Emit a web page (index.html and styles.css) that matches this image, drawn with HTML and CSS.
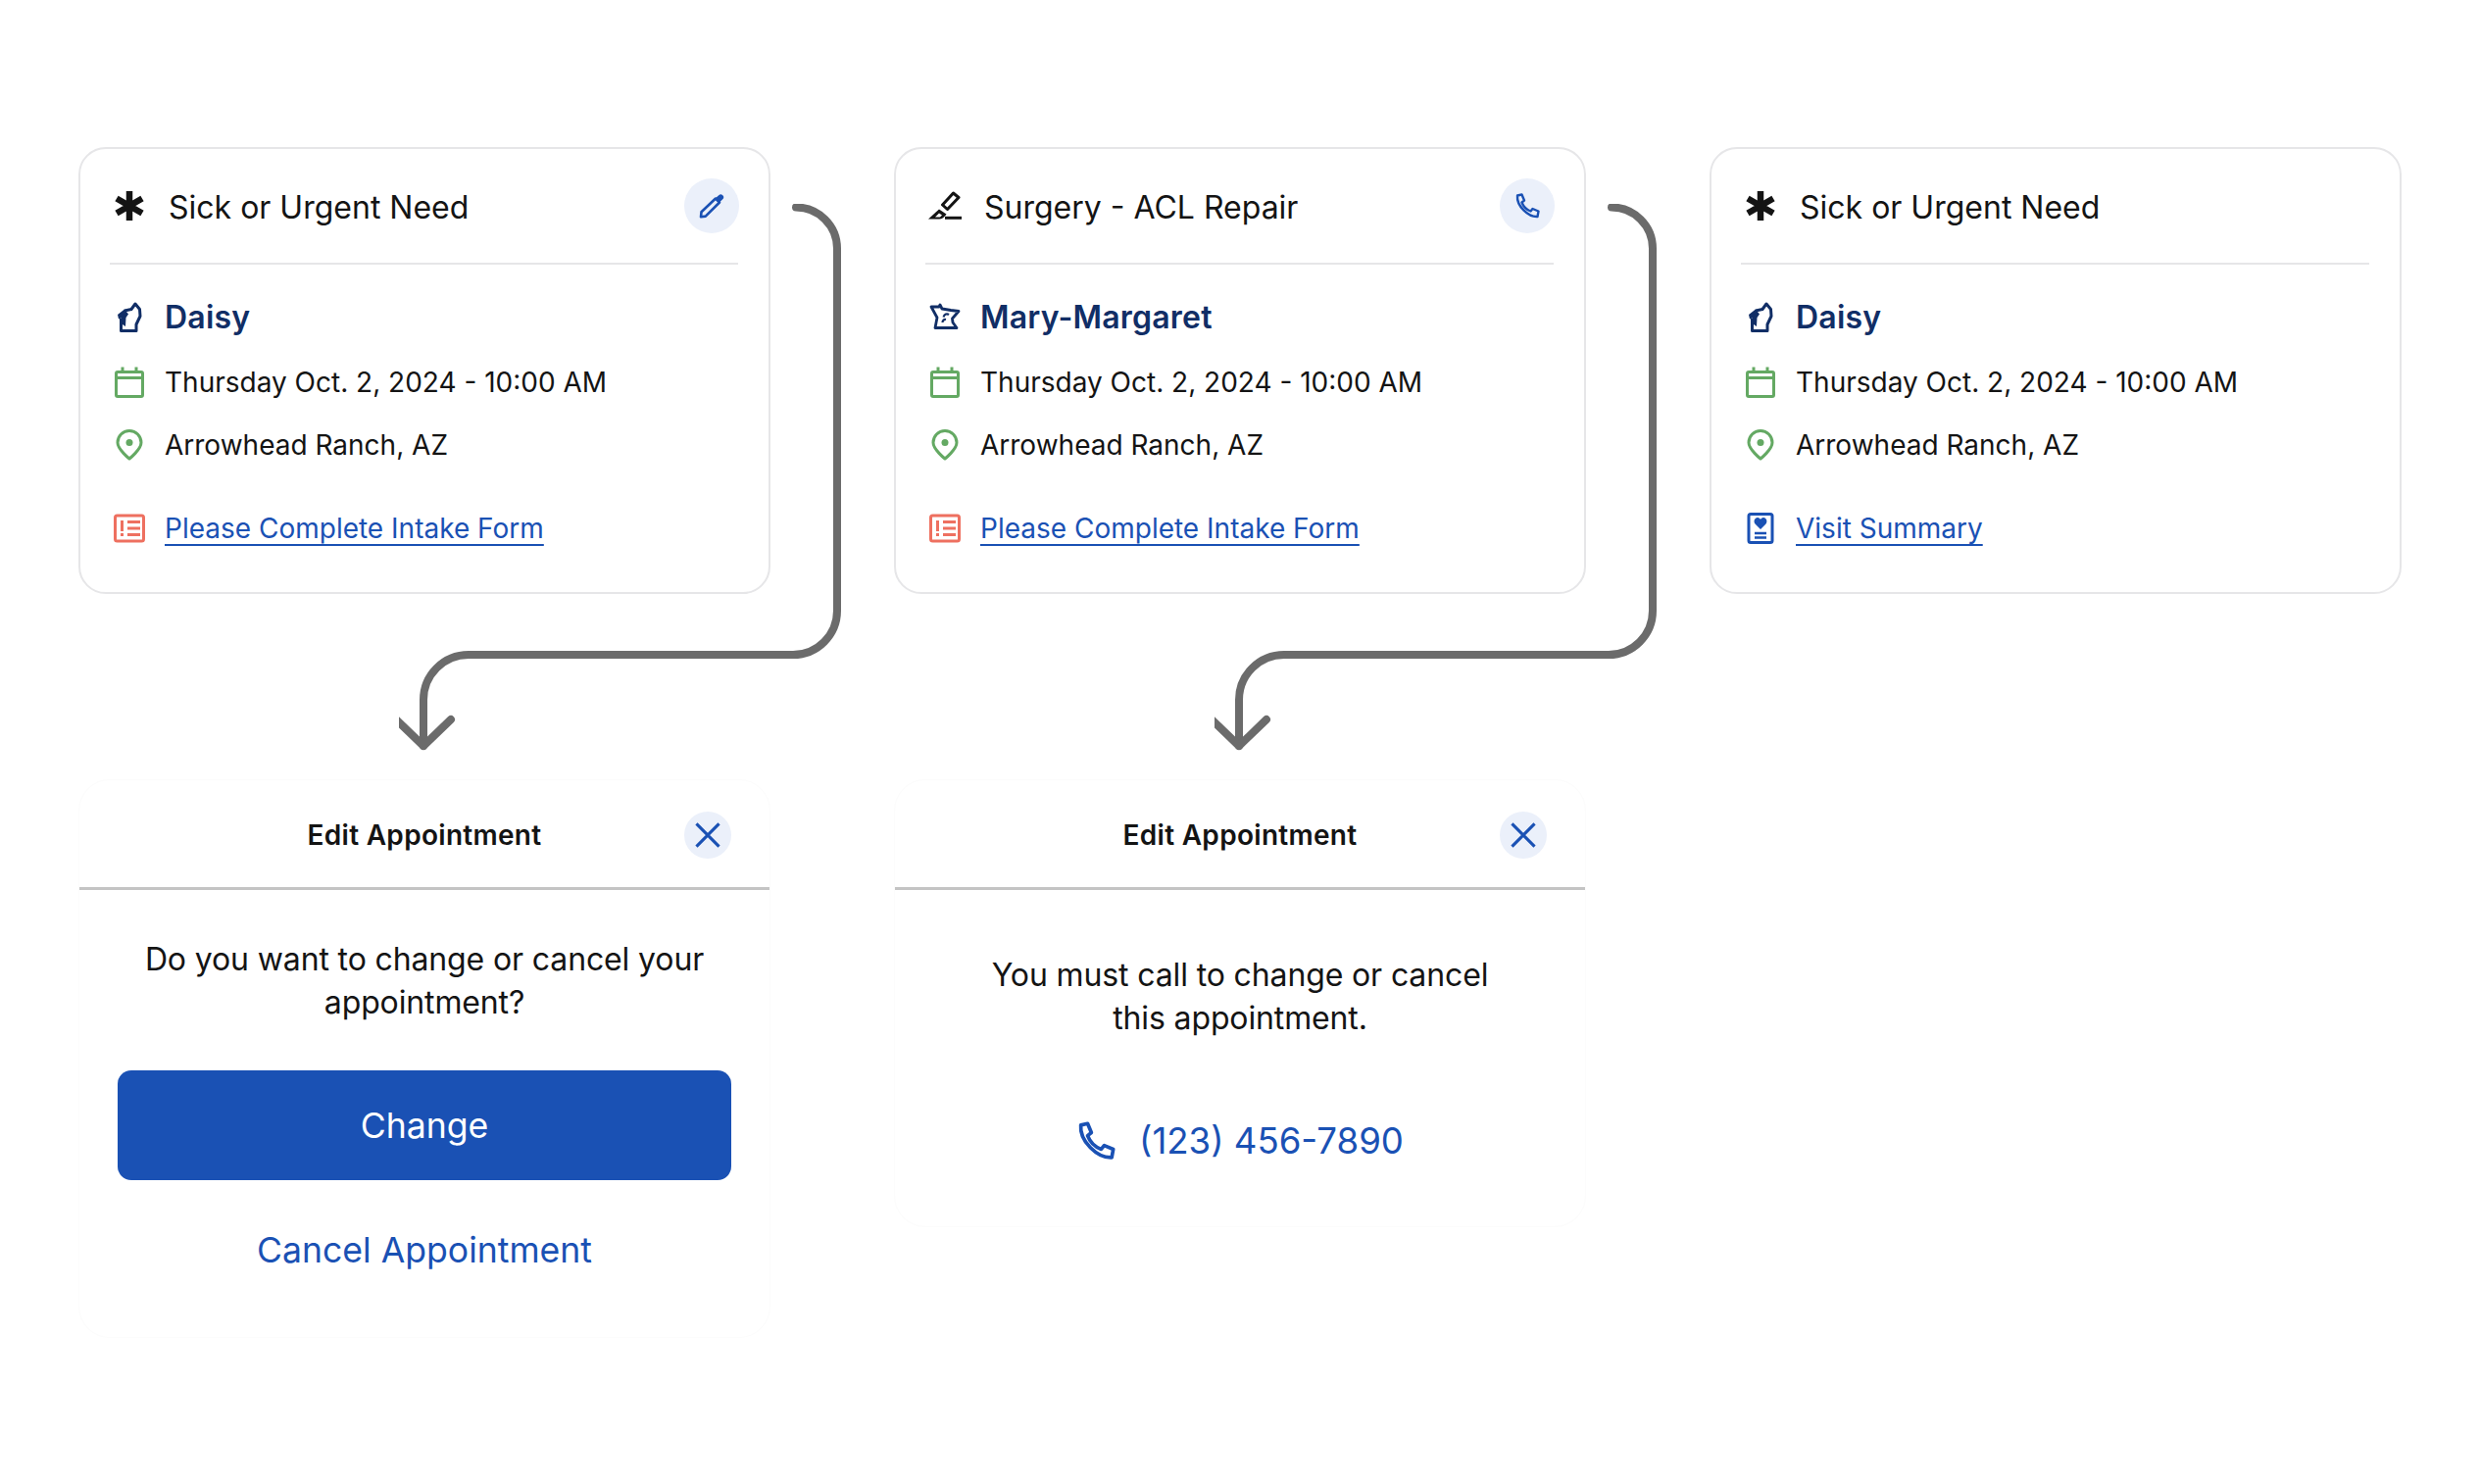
FILE: index.html
```html
<!DOCTYPE html>
<html lang="en">
  <head>
    <meta charset="UTF-8" />
    <title>Appointment Cards</title>
    <link rel="stylesheet" href="styles.css">
  </head>
  <body>
    <div class="board">
      <!-- Column 1 -->
      <section class="col">
        <div class="card">
          <div class="card-head">
            <svg class="type-icon" viewBox="0 0 36 30"><use href="#i-asterisk"/></svg>
            <span class="type-name">Sick or Urgent Need</span>
            <span class="round-btn"><svg viewBox="0 0 26 26"><use href="#i-pencil"/></svg></span>
          </div>
          <div class="row name-row">
            <svg class="row-icon" viewBox="0 0 32 32"><use href="#i-wisconsin"/></svg>
            <span>Daisy</span>
          </div>
          <div class="row">
            <svg class="row-icon" viewBox="0 0 32 32"><use href="#i-calendar"/></svg>
            <span>Thursday Oct. 2, 2024 - 10:00 AM</span>
          </div>
          <div class="row">
            <svg class="row-icon" viewBox="0 0 32 32"><use href="#i-pin"/></svg>
            <span>Arrowhead Ranch, AZ</span>
          </div>
          <div class="row link-row">
            <svg class="row-icon" viewBox="0 0 32 32"><use href="#i-form"/></svg>
            <a href="#">Please Complete Intake Form</a>
          </div>
        </div>

        <svg class="flow-arrow" viewBox="0 0 480 590"><use href="#i-flow"/></svg>

        <div class="modal">
          <div class="modal-head">
            <h2>Edit Appointment</h2>
            <span class="round-btn close-btn"><svg viewBox="0 0 26 26"><use href="#i-close"/></svg></span>
          </div>
          <p class="modal-text first-text">Do you want to change or cancel your<br>appointment?</p>
          <button class="primary-btn">Change</button>
          <a class="cancel-link" href="#">Cancel Appointment</a>
        </div>
      </section>

      <!-- Column 2 -->
      <section class="col">
        <div class="card">
          <div class="card-head">
            <svg class="type-icon" viewBox="0 0 36 30"><use href="#i-scalpel"/></svg>
            <span class="type-name">Surgery - ACL Repair</span>
            <span class="round-btn"><svg viewBox="0 0 26 26"><use href="#i-phone"/></svg></span>
          </div>
          <div class="row name-row">
            <svg class="row-icon" viewBox="0 0 32 32"><use href="#i-minnesota"/></svg>
            <span>Mary-Margaret</span>
          </div>
          <div class="row">
            <svg class="row-icon" viewBox="0 0 32 32"><use href="#i-calendar"/></svg>
            <span>Thursday Oct. 2, 2024 - 10:00 AM</span>
          </div>
          <div class="row">
            <svg class="row-icon" viewBox="0 0 32 32"><use href="#i-pin"/></svg>
            <span>Arrowhead Ranch, AZ</span>
          </div>
          <div class="row link-row">
            <svg class="row-icon" viewBox="0 0 32 32"><use href="#i-form"/></svg>
            <a href="#">Please Complete Intake Form</a>
          </div>
        </div>

        <svg class="flow-arrow" viewBox="0 0 480 590"><use href="#i-flow"/></svg>

        <div class="modal modal-call">
          <div class="modal-head">
            <h2>Edit Appointment</h2>
            <span class="round-btn close-btn"><svg viewBox="0 0 26 26"><use href="#i-close"/></svg></span>
          </div>
          <p class="modal-text second-text">You must call to change or cancel<br>this appointment.</p>
          <a class="phone-link" href="#">
            <svg viewBox="0 0 26 26"><use href="#i-phone"/></svg>
            (123) 456-7890
          </a>
        </div>
      </section>

      <!-- Column 3 -->
      <section class="col">
        <div class="card">
          <div class="card-head">
            <svg class="type-icon" viewBox="0 0 36 30"><use href="#i-asterisk"/></svg>
            <span class="type-name">Sick or Urgent Need</span>
          </div>
          <div class="row name-row">
            <svg class="row-icon" viewBox="0 0 32 32"><use href="#i-wisconsin"/></svg>
            <span>Daisy</span>
          </div>
          <div class="row">
            <svg class="row-icon" viewBox="0 0 32 32"><use href="#i-calendar"/></svg>
            <span>Thursday Oct. 2, 2024 - 10:00 AM</span>
          </div>
          <div class="row">
            <svg class="row-icon" viewBox="0 0 32 32"><use href="#i-pin"/></svg>
            <span>Arrowhead Ranch, AZ</span>
          </div>
          <div class="row link-row">
            <svg class="row-icon" viewBox="0 0 32 32"><use href="#i-summary"/></svg>
            <a href="#">Visit Summary</a>
          </div>
        </div>
      </section>
    </div>

    <!-- Icon sprites -->
    <svg class="sprites" xmlns="http://www.w3.org/2000/svg">
      <symbol id="i-asterisk" viewBox="0 0 36 30">
        <path d="M18 0V30M5 7.500L31 22.500M31 7.500L5 22.500" stroke="#141414" stroke-width="6.500" fill="none"/>
      </symbol>
      <symbol id="i-scalpel" viewBox="0 0 36 30">
        <path d="M1 28.500L12 18.500L19.500 23.500C17.500 26.500 15 28.500 12 28.500Z" fill="#141414"/>
        <path d="M8 26.500L12 22.500L15 24.500L13 26.500Z" fill="#fff"/>
        <path d="M15.500 14L26.500 2L32 6.500L20.500 18.500Z" fill="none" stroke="#141414" stroke-width="3" stroke-linejoin="round"/>
        <path d="M18 27.300H35" stroke="#141414" stroke-width="3"/>
      </symbol>
      <symbol id="i-pencil" viewBox="0 0 26 26">
        <path d="M2 24.300L2.500 19.300L17 5.500L21 9.500L6.800 23.600Z" fill="none" stroke="#1a51b4" stroke-width="2.600" stroke-linejoin="round"/>
        <path d="M16.500 5.500L20.500 2C21.500 1 23 1 24 2L24.500 2.500C25.500 3.500 25.500 5 24.500 6L21 9.500Z" fill="#1a51b4"/>
      </symbol>
      <symbol id="i-phone" viewBox="0 0 26 26">
        <path d="M3 2.500L7.500 1.500L10 7.500L7.500 9.500C9 13.500 12.500 17 16.500 18.500L18.500 16L24.500 18.500L23.500 24C14 24.500 2 13 3 2.500Z" fill="none" stroke="#1a51b4" stroke-width="2.400" stroke-linejoin="round"/>
      </symbol>
      <symbol id="i-close" viewBox="0 0 26 26">
        <path d="M3 3L23 23M23 3L3 23" stroke="#1a51b4" stroke-width="2.700" fill="none"/>
      </symbol>
      <symbol id="i-wisconsin" viewBox="0 0 32 32">
        <path d="M7.500 17V29.500H23V23L27 14.500L26.500 7.500L22 2L18 7.500L11 9" fill="none" stroke="#112e66" stroke-width="3" stroke-linejoin="round"/>
        <path d="M11 7.500L4 13L5 17.500L7.500 16.500L9 23L12 25L12.500 16L15 12.500Z" fill="#112e66"/>
      </symbol>
      <symbol id="i-minnesota" viewBox="0 0 32 32">
        <path d="M2 5H10L11 3L13 7L22 8.500L30 9.500L23.500 17L24 21L28 26.500H6L8 16Z" fill="none" stroke="#112e66" stroke-width="2.800" stroke-linejoin="round"/>
        <path d="M14.500 15.500C15.500 12.500 18 11.500 20 13M13.500 21C13.500 19 15 17.500 17 18" fill="none" stroke="#112e66" stroke-width="2.200"/>
      </symbol>
      <symbol id="i-calendar" viewBox="0 0 32 32">
        <rect x="2.500" y="5.500" width="27" height="25" rx="1.500" fill="none" stroke="#64a963" stroke-width="3"/>
        <path d="M3 11.500H29" stroke="#64a963" stroke-width="3"/>
        <path d="M9 0.500V5M23 0.500V5" stroke="#64a963" stroke-width="3"/>
      </symbol>
      <symbol id="i-pin" viewBox="0 0 32 32">
        <path d="M16 30C16 30 4 20.500 4 13.500A12 12 0 0 1 28 13.500C28 20.500 16 30 16 30Z" fill="none" stroke="#64a963" stroke-width="3" stroke-linejoin="round"/>
        <circle cx="16" cy="13.500" r="3.500" fill="#64a963"/>
      </symbol>
      <symbol id="i-form" viewBox="0 0 32 32">
        <rect x="1.500" y="3" width="29" height="26" rx="2" fill="none" stroke="#ee7060" stroke-width="3"/>
        <path d="M7 8H10V19H7ZM7 21H10V24H7ZM14 8H27V11H14ZM14 14.500H27V17.500H14ZM14 21H27V24H14Z" fill="#ee7060"/>
      </symbol>
      <symbol id="i-summary" viewBox="0 0 32 32">
        <rect x="4" y="1.500" width="24" height="29" rx="2" fill="none" stroke="#1a51b4" stroke-width="3"/>
        <path d="M16 17L10.500 11.500C8.500 9 10 5 13 5C14.500 5 15.500 6 16 7C16.500 6 17.500 5 19 5C22 5 23.500 9 21.500 11.500Z" fill="#1a51b4"/>
        <path d="M10 21H22M10 25.500H22" stroke="#1a51b4" stroke-width="2.400"/>
      </symbol>
      <symbol id="i-flow" viewBox="0 0 480 590">
        <path d="M405 3.500A42 42 0 0 1 447 45.500V415A45 45 0 0 1 402 460H71A46 46 0 0 0 25 506V553" fill="none" stroke="#6b6b6b" stroke-width="8" stroke-linecap="round"/>
        <path d="M-3 526L25 553L53 526" fill="none" stroke="#6b6b6b" stroke-width="8" stroke-linecap="round" stroke-linejoin="round"/>
      </symbol>
    </svg>
  </body>
</html>
```

FILE: styles.css
```css
* {
  box-sizing: border-box;
}

body {
  margin: 0;
  background-color: #fff;
  font-family: Inter, "Noto Sans", sans-serif;
  color: #141414;
}

.board {
  display: flex;
  gap: 126px;
  padding: 150px 0 0 80px;
}

.col {
  position: relative;
  width: 706px;
  flex-shrink: 0;
}

.sprites {
  position: absolute;
  width: 0;
  height: 0;
}

/* Cards */
.card {
  height: 456px;
  padding: 0 31px 0 30px;
  background-color: #fff;
  border: 2px solid #e6e6e8;
  border-radius: 28px;
}

.card-head {
  display: flex;
  align-items: center;
  height: 118px;
  padding-left: 2px;
  border-bottom: 2px solid #e6e6e8;
}

.type-icon {
  width: 36px;
  height: 30px;
  flex-shrink: 0;
}

.type-name {
  flex: 1;
  margin-left: 22px;
  padding-top: 2px;
  font-size: 32px;
}

.round-btn {
  display: flex;
  align-items: center;
  justify-content: center;
  width: 56px;
  height: 56px;
  margin-right: -1px;
  border-radius: 50%;
  background-color: #ebf0fa;
}

.round-btn svg {
  width: 26px;
  height: 26px;
}

.row {
  display: flex;
  align-items: center;
  height: 64px;
  padding-left: 4px;
  font-size: 28px;
}

.row-icon {
  width: 32px;
  height: 32px;
  margin-right: 20px;
  flex-shrink: 0;
}

.name-row {
  height: 69px;
  margin-top: 19px;
  font-size: 32px;
  font-weight: 600;
  letter-spacing: 0.2px;
  color: #112e66;
}

.link-row {
  margin-top: 21px;
}

.link-row a {
  color: #1a51b4;
  text-underline-offset: 6px;
  text-decoration-thickness: 2px;
}

/* Arrows */
.flow-arrow {
  position: absolute;
  left: 327px;
  top: 58px;
  width: 480px;
  height: 590px;
  overflow: visible;
}

/* Modals */
.modal {
  height: 570px;
  margin-top: 189px;
  text-align: center;
  background-color: #fff;
  border: 1px solid #fcfcfc;
  border-radius: 32px;
}

.modal-call {
  height: 457px;
}

.modal-head {
  position: relative;
  display: flex;
  align-items: center;
  justify-content: center;
  height: 112px;
  padding-top: 2px;
  border-bottom: 3px solid #c4c4c4;
}

.modal-head h2 {
  margin: 0;
  font-size: 28px;
  font-weight: 600;
  letter-spacing: 0.3px;
}

.close-btn {
  position: absolute;
  right: 39px;
  top: 32px;
  width: 48px;
  height: 48px;
  margin-right: 0;
}

.close-btn svg {
  width: 30px;
  height: 30px;
}

.modal-text {
  margin: 0;
  font-size: 32px;
  line-height: 44px;
  letter-spacing: -0.13px;
}

.first-text {
  margin-top: 49px;
}

.second-text {
  margin-top: 65px;
}

.primary-btn {
  display: block;
  width: 626px;
  height: 112px;
  margin: 47px auto 0;
  background-color: #1a51b4;
  color: #fff;
  border: none;
  border-radius: 14px;
  font-family: inherit;
  font-size: 35.600px;
}

.cancel-link {
  display: block;
  margin-top: 50px;
  font-size: 35.600px;
  line-height: 44px;
  color: #1a51b4;
  text-decoration: none;
}

.phone-link {
  display: flex;
  align-items: center;
  justify-content: center;
  gap: 24px;
  margin-top: 81px;
  font-size: 36.600px;
  line-height: 44px;
  color: #1a51b4;
  text-decoration: none;
}

.phone-link svg {
  width: 40px;
  height: 40px;
}
```
